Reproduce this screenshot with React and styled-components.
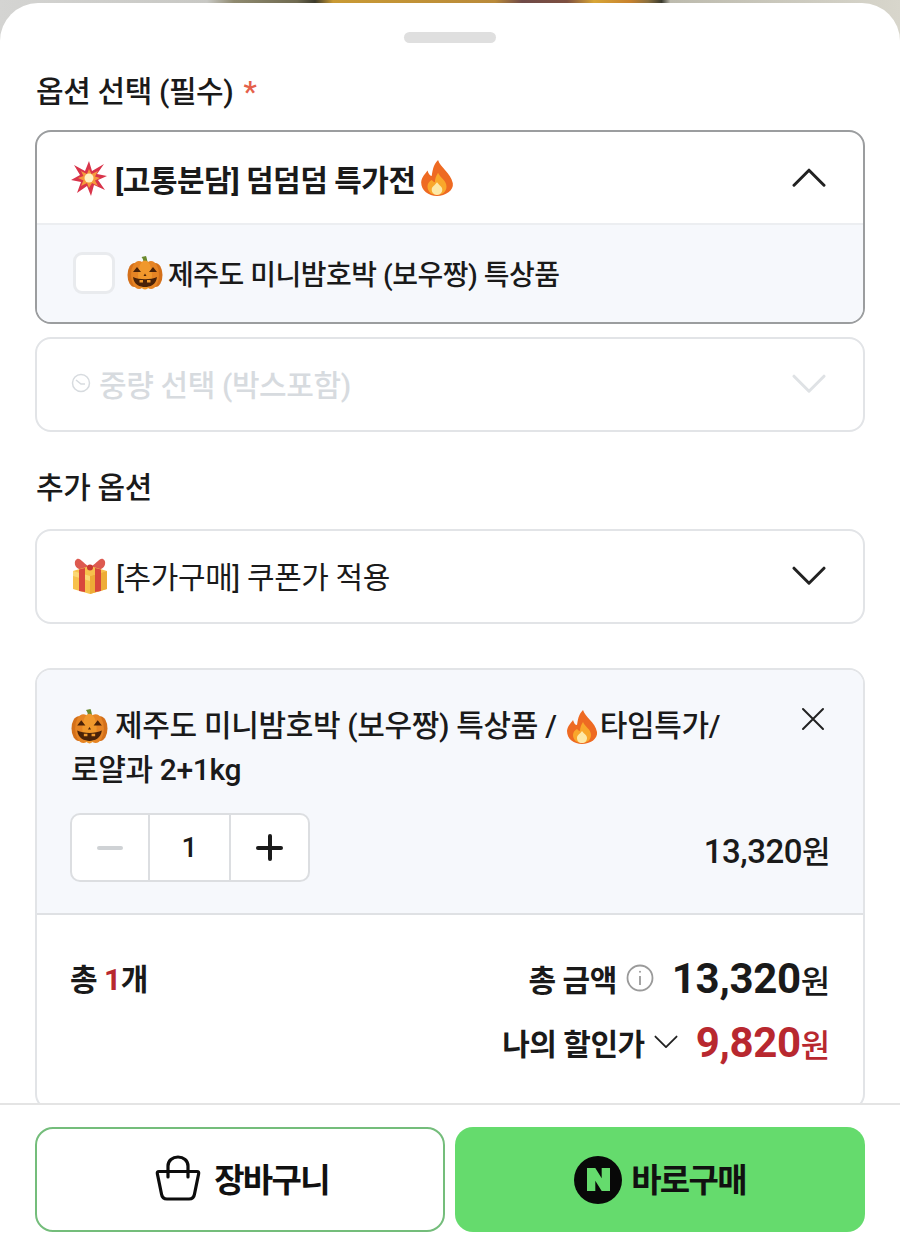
import React from 'react'
import styled, { createGlobalStyle } from 'styled-components';

const GlobalStyle = createGlobalStyle`
    html, body {
        margin: 0;
        padding: 0;
        background: #fff;
    }
    * {
        box-sizing: border-box;
    }
    body {
        font-family: Roboto, "Noto Sans CJK KR", sans-serif;
        color: #1a1a1a;
    }
`;

const Pumpkin = ({size = 36}) => (
    <svg width={size} height={size} viewBox="0 0 36 36">
        <path d="M16.500 8 C16.500 5 15.500 3 14.500 2 L19 1 C20 3 20 6 21 8 Z" fill="#6b8a2e" />
        <ellipse cx="7.500" cy="20" rx="7" ry="12" fill="#d4701a" />
        <ellipse cx="28.500" cy="20" rx="7" ry="12" fill="#d4701a" />
        <ellipse cx="12" cy="20" rx="8" ry="14" fill="#e68424" />
        <ellipse cx="24" cy="20" rx="8" ry="14" fill="#e68424" />
        <ellipse cx="18" cy="20" rx="7" ry="14.500" fill="#f0982c" />
        <path d="M6 17 L10 12 L14 17 Z M22 17 L26 12 L30 17 Z M16.500 21 L18 18.500 L19.500 21 Z" fill="#4a2208" />
        <path d="M6 22 C12 25 24 25 30 22 C29 30 23 32 18 32 C13 32 7 30 6 22 Z" fill="#4a2208" />
        <path d="M12.500 25 H16 V27.500 H12.500 Z M20 25 H23.500 V27.500 H20 Z" fill="#f0982c" />
    </svg>
);

const Fire = ({size = 36}) => (
    <svg width={size} height={size} viewBox="1 0 34 36">
        <path d="M19 1 C21 8 31 13 33 23 C34 30 26 35 18 35 C10 35 3 30 3 22 C3.500 17 7 14 9 11 C10 14 11 16 13 16 C14 11 14 6 19 1 Z" fill="#ee6a22" />
        <path d="M19 13 C21 18 27 20 27 26 C27 31 23 34 18 34 C13 34 9 31 9 26 C9 23 11 21 13 20 C14 21 15 22 16 22 C16 19 17 16 19 13 Z" fill="#f9a72b" />
        <path d="M18 22 C20 25 23 26 23 29 C23 32 21 34 18 34 C15 34 13 32 13 29 C13 26 16 25 18 22 Z" fill="#fde9a8" />
    </svg>
);

const Boom = ({size = 36}) => (
    <svg width={size} height={size} viewBox="0 0 36 36">
        <path d="M18 1 L21 11 L33 4 L26 14 L36 16 L27 20 L34 30 L23 25 L20 36 L16 26 L6 33 L10 22 L0 20 L9 15 L3 5 L14 11 Z" fill="#d9344a" />
        <path d="M18 9 L20.500 14 L27 11 L24 16.500 L29 18 L24 20.500 L27 26 L21 23 L18 28 L16 23 L10 26 L12.500 20.500 L7 18 L12.500 16 L10 11 L16 14 Z" fill="#f59a3c" />
        <circle cx="18" cy="18" r="4.500" fill="#fff3c4" />
    </svg>
);

const Gift = ({size = 38}) => (
    <svg width={size} height={size} viewBox="0 0 38 38">
        <path d="M19 11 C14 9 9 1 6 3 C2 5 4 12 8 13 C12 14 16 13 19 11 Z" fill="#dd5a50" />
        <path d="M19 11 C24 9 29 1 32 3 C36 5 34 12 30 13 C26 14 22 13 19 11 Z" fill="#dd5a50" />
        <path d="M2 15 L19 10 L36 15 L36 33 L19 38 L2 33 Z" fill="#f7c14c" />
        <path d="M2 15 L19 20 L36 15 L36 20 L19 25 L2 20 Z" fill="#fbd874" />
        <path d="M19 20 L36 15 L36 33 L19 38 Z" fill="#eeac36" />
        <path d="M8 13.500 L14 12 L14 36 L8 35 Z M24 12 L30 13.500 L30 35 L24 36 Z" fill="#d8473c" />
        <circle cx="19" cy="11.500" r="3" fill="#c83a32" />
    </svg>
);

const Chevron = ({up, color = "#222", width = 34, strokeWidth = 3}) => (
    <svg width={width} height={width * 0.6} viewBox="0 0 34 20" fill="none">
        <path d={up ? "M2 18 L17 3 L32 18" : "M2 2 L17 17 L32 2"} stroke={color} strokeWidth={strokeWidth} strokeLinecap="round" strokeLinejoin="round" />
    </svg>
);

const Bag = () => (
    <svg width="46" height="46" viewBox="0 0 46 46" fill="none" stroke="#0c0c0c" strokeWidth="3.200" strokeLinejoin="round" strokeLinecap="round">
        <path d="M4 16.500 H42 C43.500 16.500 44 17.500 43.600 19 L39.500 39 C39 42.500 37 44 34 44 H12 C9 44 7 42.500 6.500 39 L2.400 19 C2 17.500 2.500 16.500 4 16.500 Z" />
        <path d="M13 22 V11 C13 5.500 17.500 2 23 2 C28.500 2 33 5.500 33 11 V22" />
    </svg>
);

const NaverBadge = () => (
    <NaverCircle>
        <svg width="23" height="23" viewBox="2 2 18 18">
            <path d="M2 2 H8.500 L13.500 10 V2 H20 V20 H13.500 L8.500 12 V20 H2 Z" fill="#65db6d" />
        </svg>
    </NaverCircle>
);

const ClockIcon = () => (
    <svg width="20" height="20" viewBox="0 0 20 20" fill="none" stroke="#d7dbdf" strokeWidth="1.500">
        <circle cx="10" cy="10" r="8.500" />
        <path d="M5 7 L10 11 L14 11" />
    </svg>
);

const InfoIcon = () => (
    <svg width="28" height="28" viewBox="0 0 28 28" fill="none" stroke="#9a9a9a" strokeWidth="1.800">
        <circle cx="14" cy="14" r="12.500" />
        <path d="M14 12 V21" />
        <circle cx="14" cy="7.800" r="1" fill="#9a9a9a" stroke="none" />
    </svg>
);

const CloseIcon = () => (
    <CloseWrap>
        <svg width="26" height="26" viewBox="0 0 26 26" fill="none" stroke="#222" strokeWidth="2" strokeLinecap="round">
            <path d="M3 3 L23 23 M23 3 L3 23" />
        </svg>
    </CloseWrap>
);

const App = () => {
    return (
        <Page>
            <GlobalStyle />
            <Sheet>
                <Handle />
                <SectionTitle>옵션 선택 (필수) <Required>*</Required></SectionTitle>
                <OpenSelect>
                    <SelectHeader>
                        <HeaderLabel>
                            <Boom />
                            <strong>[고통분담] 덤덤덤 특가전</strong>
                            <Fire size={38} />
                        </HeaderLabel>
                        <Chevron up />
                    </SelectHeader>
                    <OptionRow>
                        <Checkbox />
                        <Pumpkin />
                        <OptionText>제주도 미니밤호박 (보우짱) 특상품</OptionText>
                    </OptionRow>
                </OpenSelect>
                <DisabledSelect>
                    <DisabledLabel><ClockIcon /> 중량 선택 (박스포함)</DisabledLabel>
                    <Chevron color="#dfe2e5" />
                </DisabledSelect>
                <SubTitle>추가 옵션</SubTitle>
                <Select>
                    <SelectLabel>
                        <Gift />
                        [추가구매] 쿠폰가 적용
                    </SelectLabel>
                    <Chevron />
                </Select>
                <SummaryCard>
                    <SelectedItem>
                        <ItemTop>
                            <ItemName>
                                <EmojiSlot><Pumpkin size={37} /></EmojiSlot> 제주도 미니밤호박 (보우짱) 특상품 / <EmojiSlot><Fire size={36} /></EmojiSlot>타임특가/<br />
                                로얄과 2+1kg
                            </ItemName>
                            <CloseIcon />
                        </ItemTop>
                        <ItemBottom>
                            <Stepper>
                                <StepCell $muted>
                                    <Bar $muted />
                                </StepCell>
                                <StepCell $value>1</StepCell>
                                <StepCell>
                                    <Plus />
                                </StepCell>
                            </Stepper>
                            <ItemPrice>13,320<small>원</small></ItemPrice>
                        </ItemBottom>
                    </SelectedItem>
                    <Totals>
                        <TotalCount>총 <em>1</em>개</TotalCount>
                        <TotalPrices>
                            <PriceLine>
                                <PriceLabel>총 금액</PriceLabel>
                                <InfoIcon />
                                <Amount>13,320<small>원</small></Amount>
                            </PriceLine>
                            <PriceLine>
                                <PriceLabel>나의 할인가</PriceLabel>
                                <Chevron width={24} strokeWidth={2.600} />
                                <Amount $sale>9,820<small>원</small></Amount>
                            </PriceLine>
                        </TotalPrices>
                    </Totals>
                </SummaryCard>
            </Sheet>
            <Footer>
                <CartButton><Bag /><ButtonText>장바구니</ButtonText></CartButton>
                <BuyButton><NaverBadge /><ButtonText>바로구매</ButtonText></BuyButton>
            </Footer>
        </Page>
    );
};

const Page = styled.div`
    position: relative;
    width: 900px;
    height: 1240px;
    overflow: hidden;
    padding-top: 3px;
    background: linear-gradient(90deg, #d4d4d2 0%, #c8c8c4 23%, #8f8a70 26%, #6f6a50 33%, #3c3a2c 35%, #c99a34 37%, #b98a3a 55%, #6f4a48 58%, #7d4f40 63%, #d8a636 66%, #c8822e 70%, #8a7040 72%, #3a3a2e 73.500%, #bdbbae 74.500%, #d8d6cc 100%);
`;

const Sheet = styled.div`
    height: 1237px;
    background: #fff;
    border-radius: 38px 38px 0 0;
    padding: 29px 35px 0;
`;

const Handle = styled.div`
    width: 92px;
    height: 11px;
    margin: 0 auto;
    border-radius: 6px;
    background: #dfdfdf;
`;

const SectionTitle = styled.h2`
    margin: 28px 0 17px;
    padding-left: 1px;
    height: 42px;
    font-size: 30px;
    line-height: 42px;
    font-weight: 500;
    letter-spacing: -0.4px;
`;

const Required = styled.span`
    color: #e5604a;
    margin-left: 3px;
`;

const Select = styled.div`
    height: 95px;
    padding: 0 37px 0 34px;
    border: 2px solid #e2e4e7;
    border-radius: 16px;
    display: flex;
    align-items: center;
    justify-content: space-between;
`;

const OpenSelect = styled.div`
    height: 194px;
    border: 2px solid #9b9d9f;
    border-radius: 16px;
    overflow: hidden;
`;

const SelectHeader = styled.div`
    height: 93px;
    padding: 0 37px 0 34px;
    display: flex;
    align-items: center;
    justify-content: space-between;
    border-bottom: 2px solid #eceef1;
`;

const HeaderLabel = styled.div`
    display: flex;
    align-items: center;
    gap: 8px;
    font-size: 30px;
    letter-spacing: -0.5px;

    strong {
        font-weight: 700;
        margin-right: -6px;
    }
`;

const OptionRow = styled.div`
    height: 97px;
    padding: 0 33px 2px 36px;
    background: #f6f8fc;
    display: flex;
    align-items: center;
`;

const Checkbox = styled.div`
    width: 42px;
    height: 42px;
    border: 3px solid #e9ebee;
    border-radius: 9px;
    background: #fff;
    margin-right: 12px;
`;

const OptionText = styled.span`
    margin-left: 5px;
    font-size: 28px;
    font-weight: 500;
    letter-spacing: -0.5px;
`;

const DisabledSelect = styled(Select)`
    margin-top: 13px;
`;

const DisabledLabel = styled.div`
    display: flex;
    align-items: center;
    gap: 8px;
    padding-bottom: 4px;
    color: #d7dbdf;
    font-size: 30px;
    font-weight: 500;
    letter-spacing: -0.4px;
`;

const SubTitle = styled.h3`
    margin: 35px 0 20px;
    padding-left: 1px;
    height: 42px;
    font-size: 30px;
    line-height: 42px;
    font-weight: 500;
    letter-spacing: -0.4px;
`;

const SelectLabel = styled.div`
    display: flex;
    align-items: center;
    gap: 7px;
    font-size: 30px;
    font-weight: 400;
    letter-spacing: -0.4px;
    padding-bottom: 4px;
`;

const SummaryCard = styled.div`
    margin-top: 44px;
    height: 442px;
    border: 2px solid #e2e4e7;
    border-radius: 16px;
    overflow: hidden;
`;

const SelectedItem = styled.div`
    height: 245px;
    padding: 34px 33px 0 34px;
    background: #f6f8fc;
    border-bottom: 2px solid #dfe1e4;
`;

const ItemTop = styled.div`
    display: flex;
    justify-content: space-between;
    align-items: flex-start;
`;

const CloseWrap = styled.span`
    display: block;
    line-height: 0;
    margin: 2px 4px 0 0;
`;

const ItemName = styled.div`
    font-size: 30px;
    line-height: 44px;
    font-weight: 500;
    letter-spacing: -0.35px;
`;

const EmojiSlot = styled.span`
    display: inline-block;
    vertical-align: -9px;
    line-height: 0;
`;

const ItemBottom = styled.div`
    margin-top: 21px;
    display: flex;
    justify-content: space-between;
    align-items: center;
`;

const Stepper = styled.div`
    width: 240px;
    height: 69px;
    margin-left: -1px;
    display: grid;
    grid-template-columns: 76px 81px 1fr;
    background: #fff;
    border: 2px solid #dcdee1;
    border-radius: 10px;
`;

const StepCell = styled.div`
    display: flex;
    align-items: center;
    justify-content: center;
    font-size: 28px;
    font-weight: 500;
    border-left: ${({$muted}) => ($muted ? "0" : "2px solid #dcdee1")};
`;

const Bar = styled.span`
    display: block;
    width: 26px;
    height: 4px;
    border-radius: 2px;
    background: ${({$muted}) => ($muted ? "#cfd2d5" : "#1a1a1a")};
`;

const Plus = styled.span`
    position: relative;
    display: block;
    width: 27px;
    height: 4px;
    border-radius: 2px;
    background: #1a1a1a;

    &::after {
        content: "";
        position: absolute;
        left: 11.5px;
        top: -11.5px;
        width: 4px;
        height: 27px;
        border-radius: 2px;
        background: #1a1a1a;
    }
`;

const ItemPrice = styled.div`
    font-size: 33px;
    font-weight: 500;
    letter-spacing: -0.5px;
    padding-top: 3px;

    small {
        font-size: 31px;
    }
`;

const Totals = styled.div`
    padding: 38px 33px 0 33px;
    display: flex;
    justify-content: space-between;
    align-items: flex-start;
`;

const TotalCount = styled.div`
    padding-top: 4px;
    font-size: 30px;
    line-height: 46px;
    font-weight: 700;
    letter-spacing: -0.5px;

    em {
        font-style: normal;
        color: #b8282f;
    }
`;

const TotalPrices = styled.div`
    display: flex;
    flex-direction: column;
    align-items: flex-end;
    gap: 12px;
    margin-top: -1px;
`;

const PriceLine = styled.div`
    display: flex;
    align-items: center;
    gap: 9px;
    height: 52px;
`;

const PriceLabel = styled.span`
    font-size: 30px;
    font-weight: 700;
    letter-spacing: -0.5px;
`;

const Amount = styled.span`
    margin-left: 9px;
    font-size: 42px;
    font-weight: 700;
    letter-spacing: -0.3px;
    color: ${({$sale}) => ($sale ? "#b8282f" : "#1a1a1a")};

    small {
        font-size: 32px;
        font-weight: 500;
    }
`;

const Footer = styled.div`
    position: absolute;
    left: 0;
    right: 0;
    bottom: 0;
    height: 137px;
    padding: 22px 35px 8px 35px;
    display: grid;
    grid-template-columns: 410px 410px;
    gap: 10px;
    background: #fff;
    border-top: 2px solid #e4e4e4;
`;

const ButtonText = styled.span`
    padding-bottom: 4px;
`;

const CartButton = styled.button`
    display: flex;
    align-items: center;
    justify-content: center;
    gap: 13px;
    padding: 0 0 0 4px;
    background: #fff;
    border: 2px solid #74bd7b;
    border-radius: 18px;
    font-family: inherit;
    font-size: 33px;
    font-weight: 700;
    letter-spacing: -1.7px;
    color: #111;

    > svg {
        margin-bottom: 4px;
    }
`;

const BuyButton = styled(CartButton)`
    gap: 9px;
    padding: 0;
    background: #65db6d;
    border: 0;
`;

const NaverCircle = styled.span`
    width: 48px;
    height: 48px;
    border-radius: 50%;
    background: #080808;
    display: flex;
    align-items: center;
    justify-content: center;
`;

export default App;
